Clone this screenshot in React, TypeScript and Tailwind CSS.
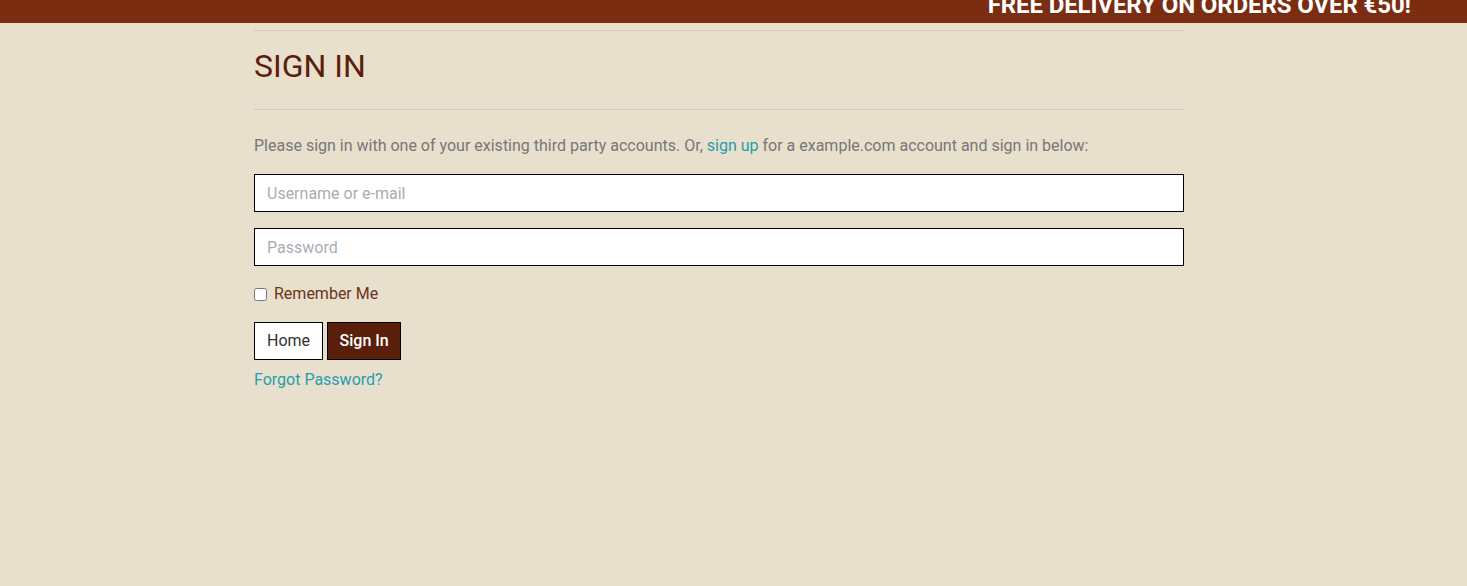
import React from "react";

export default function App() {
  return (
    <div className="min-h-[586px] bg-[#e9dfcd] font-['Roboto',sans-serif]">
      <div className="h-[23px] overflow-hidden bg-[#7a2d10] flex justify-end pr-[56px]">
        <span className="text-white font-bold text-[24px] leading-none -mt-[7px] whitespace-nowrap tracking-[-0.1px]">
          FREE DELIVERY ON ORDERS OVER €50!
        </span>
      </div>
      <div className="ml-[254px] w-[930px]">
        <div className="mt-[7px] border-t border-[#d4c9b8]" />
        <h1 className="mt-[16px] mb-[24px] text-[32px] leading-[38px] text-[#5a1f0b] font-normal">SIGN IN</h1>
        <div className="border-t border-[#d4c9b8]" />
        <p className="mt-[24px] text-[16px] leading-[24px] text-[#777777]">
          Please sign in with one of your existing third party accounts. Or,{" "}
          <a className="text-[#1e9fae]">sign up</a> for a example.com account and sign in below:
        </p>
        <input
          className="mt-[16px] block w-full h-[38px] border border-black bg-white px-[12px] text-[16px] placeholder:text-[#a9acb3] outline-none"
          placeholder="Username or e-mail"
        />
        <input
          type="password"
          className="mt-[16px] block w-full h-[38px] border border-black bg-white px-[12px] text-[16px] placeholder:text-[#a9acb3] outline-none"
          placeholder="Password"
        />
        <label className="mt-[16px] flex items-center h-[24px] text-[16px] text-[#6b3420]">
          <input type="checkbox" className="w-[13px] h-[13px] m-0 mr-[7px]" />
          Remember Me
        </label>
        <div className="mt-[16px] flex gap-[4px]">
          <button className="h-[38px] px-[12px] border border-black bg-white text-[16px] text-[#333333]">Home</button>
          <button className="h-[38px] px-[11.5px] border border-black bg-[#5a1f0b] text-[16px] font-medium text-white">Sign In</button>
        </div>
        <a className="mt-[8px] block text-[16px] leading-[24px] text-[#1e9fae]">Forgot Password?</a>
      </div>
    </div>
  );
}
